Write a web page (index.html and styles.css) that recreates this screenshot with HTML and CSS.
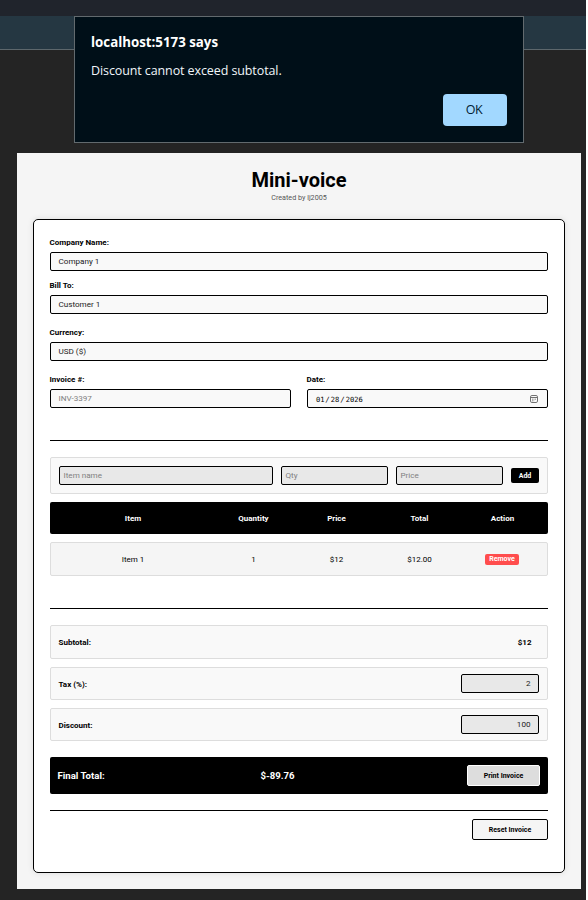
FILE: index.html
```html
<!DOCTYPE html>
<html lang="en">
<head>
<meta charset="utf-8">
<title>Mini-voice</title>
<link rel="stylesheet" href="styles.css">
</head>
<body>
<div class="window">
  <div class="tabstrip"></div>
  <div class="toolbar"></div>
  <div class="dialog" role="dialog">
    <div class="dialog-title">localhost:5173 says</div>
    <div class="dialog-text">Discount cannot exceed subtotal.</div>
    <button class="dialog-ok">OK</button>
  </div>
  <main class="page">
    <h1>Mini-voice</h1>
    <p class="credit">Created by lj2005</p>
    <section class="card">
      <div class="field"><label>Company Name:</label><div class="input">Company 1</div></div>
      <div class="field bill"><label>Bill To:</label><div class="input">Customer 1</div></div>
      <div class="field"><label>Currency:</label><div class="input">USD ($)</div></div>
      <div class="pair">
        <div class="field"><label>Invoice #:</label><div class="input placeholder">INV-3397</div></div>
        <div class="field"><label>Date:</label>
          <div class="input date"><span>01<i>/</i>28<i>/</i>2026</span>
            <svg width="8" height="8" viewBox="0 0 8 8" fill="none" stroke="#707070"><rect x=".5" y=".5" width="7" height="7" rx="1.4"/><path d="M.5 2.5h7"/><path d="M2 4.2h4M2 5.8h2.2" stroke-width=".8" stroke-dasharray="1 .5"/></svg>
          </div>
        </div>
      </div>
      <hr>
      <div class="add-row">
        <div class="input placeholder gray">Item name</div>
        <div class="input placeholder gray">Qty</div>
        <div class="input placeholder gray">Price</div>
        <button class="add">Add</button>
      </div>
      <div class="row head"><span>Item</span><span>Quantity</span><span>Price</span><span>Total</span><span>Action</span></div>
      <div class="row item"><span>Item 1</span><span>1</span><span>$12</span><span>$12.00</span><button class="remove">Remove</button></div>
      <hr>
      <div class="sum subtotal"><b>Subtotal:</b><b class="amount">$12</b></div>
      <div class="sum"><b>Tax (%):</b><div class="input gray number">2</div></div>
      <div class="sum"><b>Discount:</b><div class="input gray number">100</div></div>
      <div class="final"><b>Final Total:</b><b class="total">$-89.76</b><button class="print">Print Invoice</button></div>
      <hr class="last">
      <button class="reset">Reset Invoice</button>
    </section>
  </main>
</div>
</body>
</html>
```
FILE: styles.css
```css
* { box-sizing: border-box; }
html { background: #fff; }
body { margin: 0; height: 900px; overflow: hidden; font: 8px/10px Roboto, sans-serif; color: #000; }
button { display: block; margin: 0; padding: 0; font: bold 7px/9px Roboto, sans-serif; }
.window { position: relative; width: 586px; height: 900px; background: #242424; }
.tabstrip { height: 16px; background: #20242c; }
.toolbar { height: 34px; background: #253742; border-bottom: 1px solid #5d676c; }
.dialog { position: absolute; left: 74px; top: 16px; width: 450px; height: 127px; padding: 15px 16px; background: #000f18; border: 1px solid #626a6e; color: #f0f6fa; font-family: "Open Sans", sans-serif; }
.dialog-title { font-size: 13.3px; line-height: 20px; font-weight: 700; color: #fff; }
.dialog-text { margin-top: 9px; font-size: 12.5px; line-height: 20px; letter-spacing: -.1px; }
.dialog-ok { margin: 13px 0 0 auto; width: 64px; height: 32px; padding-right: 2px; border: 0; border-radius: 4px; background: #a2d8ff; color: #002033; font: 12.5px/20px "Open Sans", sans-serif; letter-spacing: -.4px; }
.page { margin: 103px 0 0 17px; width: 564px; height: 736px; padding: 14px 16px 0; background: #f5f5f5; }
h1 { margin: 0; text-align: center; font-size: 20px; line-height: 26px; font-weight: 700; }
.credit { margin: 0; text-align: center; font-size: 7.2px; line-height: 10px; color: #555; }
.card { margin-top: 16px; height: 654px; padding: 16px; background: #fff; border: 1px solid #000; border-radius: 5px; box-shadow: 0 0 6px rgba(0,0,0,.1); }
.field { height: 35px; margin-bottom: 12px; }
.bill { margin-top: -4px; }
label { display: block; height: 16px; line-height: 13px; font-weight: 700; margin-left: -.5px; }
.input { height: 19px; border: 1px solid #000; border-radius: 2px; background: #f9f9f9; padding: 0 7.5px; line-height: 17px; font-size: 8.1px; color: #222; }
.placeholder { color: #808080; }
.pair { display: grid; grid-template-columns: 241px 241px; gap: 16px; }
.pair .field { margin: 0; }
.date { display: flex; align-items: center; justify-content: space-between; padding: 0 9px 0 8px; font: 7.1px/17px "DejaVu Sans Mono", monospace; color: #000; }
.date span { padding-top: 2px; }
.date i { margin: 0 1px; }
hr { height: 1px; margin: 32px 0 16px; border: 0; background: #000; }
.add-row { display: grid; grid-template-columns: 214px 107px 107px 28px; gap: 8px; align-items: center; height: 37px; padding: 0 8px; border: 1px solid #ddd; border-radius: 2px; background: #f9f9f9; }
.gray { background: #e8e8e8; }
.add-row .input { padding: 0 3.5px; }
.add { height: 15px; padding-top: 1px; background: #000; color: #fff; border: 0; border-radius: 2px; }
.row { display: grid; grid-template-columns: 150px repeat(4, 75px); gap: 8px; padding: 0 8px; align-items: center; text-align: center; margin-top: 8px; border-radius: 2px; }
.head { height: 32px; padding-top: 1px; background: #000; color: #fff; font-weight: 700; }
.item { height: 34px; padding: 0 7px; background: #f5f5f5; border: 1px solid #ddd; }
.item span { padding-top: 2px; }
.remove { margin: 0 auto 0 20px; width: 34px; height: 11px; padding-top: 1px; border: 0; border-radius: 2px; background: #ff4d4d; color: #fff; font-size: 7px; }
.sum { display: flex; align-items: center; justify-content: space-between; height: 33px; padding: 0 8px 0 7.5px; margin-bottom: 8px; border: 1px solid #ddd; border-radius: 2px; background: #f9f9f9; }
.sum > b { padding-top: 2px; }
.subtotal { height: 34px; }
.subtotal > b { padding-top: 1px; }
.amount { margin-right: 7.5px; }
.number { width: 78px; text-align: right; }
.final { display: grid; grid-template-columns: 150px 1fr 73px; align-items: center; height: 37px; margin-top: 16px; padding: 0 8px 0 7.5px; border-radius: 2px; background: #000; color: #fff; font-size: 9.6px; }
.total { padding-left: 53px; }
.print, .reset { padding-top: 1px; border: 1px solid #fff; border-radius: 2px; background: #ddd; width: 73px; height: 21px; color: #000; }
.last { margin: 16px 0 8px; }
.reset { width: 76px; margin-left: auto; border-color: #000; background: #f5f5f5; }
```
